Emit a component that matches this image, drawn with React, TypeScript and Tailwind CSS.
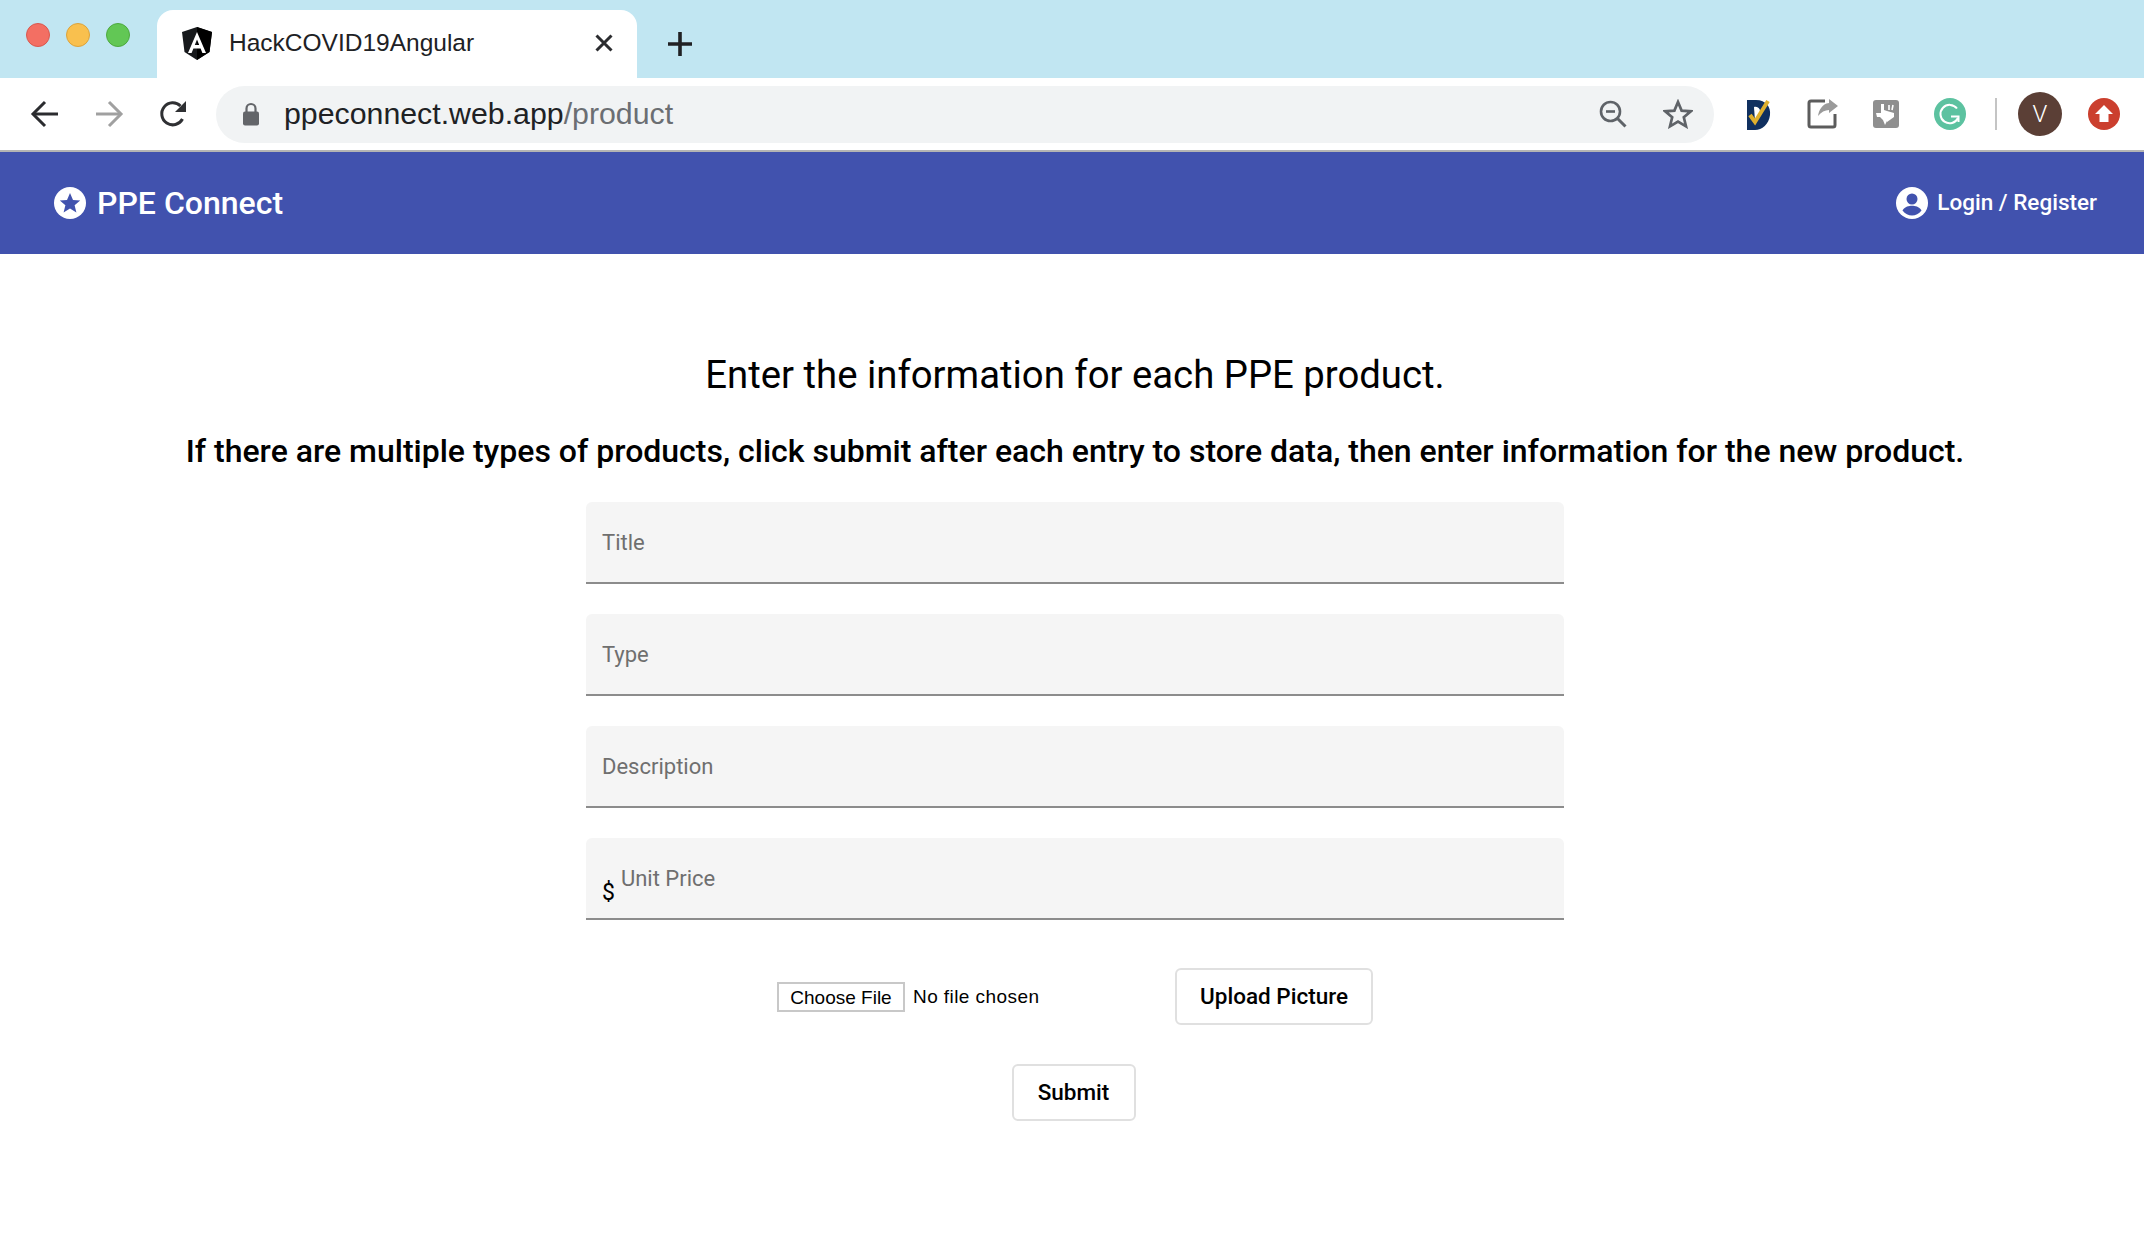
const uiFont = "font-['Roboto',sans-serif]";

function AngularLogo() {
    return (
        <svg width="32" height="33" viewBox="0 0 32 33">
            <path d="M16 0 L1 5 L3.5 25 L16 33 L28.5 25 L31 5 Z" fill="#17191c" />
            <path d="M16 0 L31 5 L28.5 25 L16 33 Z" fill="#000" />
            <path d="M16 5 L7 26 H10.6 L12.4 21.4 H19.6 L21.4 26 H25 Z M13.8 18 L16 12.4 L18.2 18 Z" fill="#fff" fillRule="evenodd" />
        </svg>
    );
}

function BackArrow({ color }: { color: string }) {
    return (
        <svg width="30" height="28" viewBox="0 0 30 28" fill="none" stroke={color} strokeWidth="3">
            <path d="M28 14 H3" />
            <path d="M15 2 L3 14 L15 26" />
        </svg>
    );
}

function ForwardArrow({ color }: { color: string }) {
    return (
        <svg width="30" height="28" viewBox="0 0 30 28" fill="none" stroke={color} strokeWidth="3">
            <path d="M2 14 H27" />
            <path d="M15 2 L27 14 L15 26" />
        </svg>
    );
}

function Reload() {
    return (
        <svg width="30" height="30" viewBox="0 0 30 30" fill="none">
            <path d="M24.5 20 A11 11 0 1 1 22.5 7" stroke="#2f3033" strokeWidth="3" />
            <path d="M28 2 V13 H17 Z" fill="#2f3033" />
        </svg>
    );
}

function Lock() {
    return (
        <svg width="18" height="24" viewBox="0 0 18 24" fill="none">
            <path d="M4.5 10 V6.5 A4.5 4.5 0 0 1 13.5 6.5 V10" stroke="#636569" strokeWidth="2.2" />
            <rect x="1" y="9.5" width="16" height="14" rx="2" fill="#636569" />
        </svg>
    );
}

function ZoomOut() {
    return (
        <svg width="28" height="28" viewBox="0 0 28 28" fill="none" stroke="#5f6368" strokeWidth="2.6">
            <circle cx="11.5" cy="11.5" r="9.5" />
            <path d="M18 18 L26.5 26.5" strokeWidth="3" />
            <path d="M7 11.5 H16" />
        </svg>
    );
}

function Star() {
    return (
        <svg width="30" height="30" viewBox="0 0 30 30" fill="none" stroke="#5f6368" strokeWidth="2.7" strokeLinejoin="miter">
            <path d="M15 3 L18.6 11.6 L27.8 12.3 L20.8 18.3 L23 27.3 L15 22.5 L7 27.3 L9.2 18.3 L2.2 12.3 L11.4 11.6 Z" />
        </svg>
    );
}

function DocIcon() {
    return (
        <svg width="24" height="32" viewBox="0 0 24 32">
            <path d="M0 2 H9 C19 2 24 9 23 17 C22 26 15 32 8 32 H0 Z" fill="#10305f" />
            <path d="M7 9 C12 8 14 12 13 18 L8 23 Z" fill="#fff" />
            <path d="M3 17 L8 24 L21 3" fill="none" stroke="#dfb02e" strokeWidth="4" />
        </svg>
    );
}

function ShareIcon() {
    return (
        <svg width="32" height="32" viewBox="0 0 32 32" fill="none">
            <path d="M18 3 H4 A2 2 0 0 0 2 5 V27 A2 2 0 0 0 4 29 H26 A2 2 0 0 0 28 27 V16" stroke="#5c5c5c" strokeWidth="3" />
            <path d="M31 8 L22 1 V5 C15 6 12 12 11 18 C14 14 18 12 22 12 V15 Z" fill="#9a9a9a" />
        </svg>
    );
}

function TexasIcon() {
    return (
        <svg width="26" height="28" viewBox="0 0 26 28">
            <rect width="26" height="28" rx="3" fill="#8f8f8f" />
            <path d="M8 4 H11 V10 L14 11 V21 L12 25 L10 20 L7 17 H4 L3 13 H8 Z" fill="#fff" />
            <path d="M14 11 L21 13 V17 L14 22 Z" fill="#fff" />
            <path d="M16 5 V10 M20 5 L19 10" stroke="#fff" strokeWidth="1.6" />
        </svg>
    );
}

function GrammarlyIcon() {
    return (
        <svg width="32" height="32" viewBox="0 0 32 32" fill="none">
            <circle cx="16" cy="16" r="16" fill="#5cc2a0" />
            <path d="M23 10.5 A9.2 9.2 0 1 0 24 20" stroke="#fff" strokeWidth="2" />
            <path d="M17 18.5 H24.5 V24" stroke="#fff" strokeWidth="2" />
        </svg>
    );
}

function UploadBadge() {
    return (
        <svg width="32" height="32" viewBox="0 0 32 32">
            <circle cx="16" cy="16" r="16" fill="#cb3f2e" />
            <path d="M16 7 L25 16 H20.5 V24 H11.5 V16 H7 Z" fill="#fff" />
        </svg>
    );
}

function StarBadge() {
    return (
        <svg width="32" height="32" viewBox="0 0 32 32">
            <circle cx="16" cy="16" r="16" fill="#fff" />
            <path d="M16 6 L19 13 L26.2 13.5 L20.6 18.3 L22.4 25.5 L16 21.6 L9.6 25.5 L11.4 18.3 L5.8 13.5 L13 13 Z" fill="#4152ae" />
        </svg>
    );
}

function AccountIcon() {
    return (
        <svg width="32" height="32" viewBox="0 0 32 32">
            <circle cx="16" cy="16" r="16" fill="#fff" />
            <circle cx="16" cy="12" r="5.5" fill="#4152ae" />
            <path d="M6.5 23.5 C9 19.5 13 18.8 16 18.8 C19 18.8 23 19.5 25.5 23.5 C23 27 19.5 28.6 16 28.6 C12.5 28.6 9 27 6.5 23.5 Z" fill="#4152ae" />
        </svg>
    );
}

function Field({ label, prefix }: { label: string; prefix?: string }) {
    return (
        <div className="flex h-[82px] w-full items-center rounded-t-[6px] border-b-2 border-[#8c8c8c] bg-[#f5f5f5] px-4">
            {prefix && <span className="mr-[6px] mt-[29px] text-[23px] leading-none text-black">{prefix}</span>}
            <input
                placeholder={label}
                className="w-full bg-transparent text-[22px] text-black outline-none placeholder:text-[#6f6f6f]"
            />
        </div>
    );
}

function OutlineButton({ children, className }: { children: string; className: string }) {
    return (
        <button className={`h-[57px] rounded-[6px] border-2 border-[#e0e0e0] bg-white text-[22.5px] font-medium text-black ${className}`}>
            {children}
        </button>
    );
}

export default function App() {
    return (
        <div className={`min-h-screen w-full bg-white ${uiFont}`}>
            {/* Browser tab strip */}
            <div className="flex h-[78px] items-end bg-[#c1e6f2]">
                <div className="flex h-full items-center gap-4 pb-[8px] pl-[26px] pr-[27px]">
                    <span className="h-6 w-6 rounded-full border border-[#d9584e] bg-[#f36f63]" />
                    <span className="h-6 w-6 rounded-full border border-[#dca33c] bg-[#f9c04e]" />
                    <span className="h-6 w-6 rounded-full border border-[#4ea93f] bg-[#62c755]" />
                </div>
                <div className="flex h-[68px] w-[480px] items-center rounded-t-[16px] bg-white pb-[2px] pl-[24px] pr-[23px]">
                    <AngularLogo />
                    <span className="ml-[16px] flex-1 font-['Liberation_Sans',sans-serif] text-[24.5px] text-[#202124]">HackCOVID19Angular</span>
                    <svg width="20" height="20" viewBox="0 0 20 20" stroke="#2b2c2f" strokeWidth="3">
                        <path d="M2.5 2.5 L17.5 17.5 M17.5 2.5 L2.5 17.5" />
                    </svg>
                </div>
                <div className="flex h-full items-center pl-[30px] pt-[10px]">
                    <svg width="26" height="26" viewBox="0 0 26 26" stroke="#202124" strokeWidth="3.6">
                        <path d="M13 1 V25 M1 13 H25" />
                    </svg>
                </div>
            </div>

            {/* Browser toolbar */}
            <div className="flex h-[74px] items-center border-b-2 border-[#b4b4b4] bg-white">
                <div className="flex w-[216px] items-center gap-[34px] pl-[30px]">
                    <BackArrow color="#2b2c2f" />
                    <ForwardArrow color="#a0a0a0" />
                    <Reload />
                </div>
                <div className="flex h-[57px] w-[1498px] items-center rounded-full bg-[#f1f3f4] pl-[26px] pr-[21px]">
                    <Lock />
                    <div className="ml-[24px] flex-1 font-['Liberation_Sans',sans-serif] text-[30.3px] text-[#202124]">
                        ppeconnect.web.app<span className="text-[#6b6e72]">/product</span>
                    </div>
                    <div className="flex items-center gap-[36px]">
                        <ZoomOut />
                        <Star />
                    </div>
                </div>
                <div className="flex flex-1 items-center pl-[33px]">
                    <DocIcon />
                    <span className="ml-[36px]"><ShareIcon /></span>
                    <span className="ml-[34px]"><TexasIcon /></span>
                    <span className="ml-[35px]"><GrammarlyIcon /></span>
                    <span className="ml-[29px] h-[32px] w-[2px] bg-[#c4c4c4]" />
                    <span className="ml-[21px] flex h-11 w-11 items-center justify-center rounded-full bg-[#5b3f36] text-[24px] font-light text-white">V</span>
                    <span className="ml-[26px]"><UploadBadge /></span>
                </div>
            </div>

            {/* App header */}
            <div className="flex h-[102px] items-center justify-between bg-[#4152ae] pl-[54px] pr-[47px] text-white">
                <div className="flex items-center gap-[11px]">
                    <StarBadge />
                    <span className="text-[32px] font-medium">PPE Connect</span>
                </div>
                <div className="flex items-center gap-[9px]">
                    <AccountIcon />
                    <span className="text-[22.5px] font-medium">Login / Register</span>
                </div>
            </div>

            {/* Product form */}
            <div className="flex flex-col items-center pl-[6px]">
                <h1 className="mt-[98px] text-[38.3px] font-normal leading-[46px] text-black">Enter the information for each PPE product.</h1>
                <h2 className="mt-[33px] text-[32px] font-medium leading-[40px] text-black">
                    If there are multiple types of products, click submit after each entry to store data, then enter information for the new product.
                </h2>
                <div className="mt-[31px] flex w-[978px] flex-col gap-[30px]">
                    <Field label="Title" />
                    <Field label="Type" />
                    <Field label="Description" />
                    <Field label="Unit Price" prefix="$" />
                </div>
                <div className="mt-[48px] flex items-center">
                    <div className="flex w-[398px] items-center">
                        <button className="h-[30px] w-[128px] border-2 border-[#c8c8c8] bg-white font-['Liberation_Sans',sans-serif] text-[19px] text-black">Choose File</button>
                        <span className="ml-2 pt-[2px] font-['Liberation_Sans',sans-serif] text-[19px] tracking-[0.43px] text-black">No file chosen</span>
                    </div>
                    <OutlineButton className="w-[198px]">Upload Picture</OutlineButton>
                </div>
                <OutlineButton className="mr-[3px] mt-[39px] w-[124px]">Submit</OutlineButton>
            </div>
        </div>
    );
}
